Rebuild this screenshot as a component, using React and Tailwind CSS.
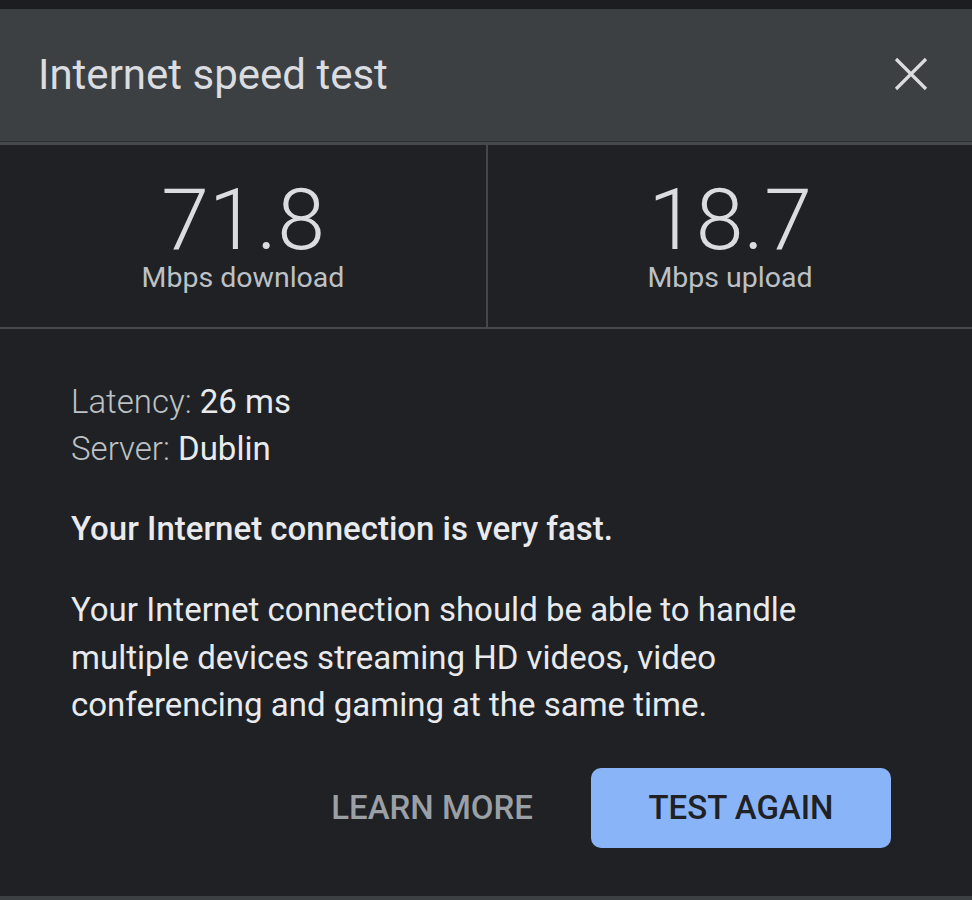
export default function App() {
  return (
    <div className="w-[972px] h-[900px] bg-[#202124] flex flex-col font-['Roboto',sans-serif] overflow-hidden">
      <div className="h-[9px] bg-[#1b1d20] shrink-0" />
      <div className="h-[132px] bg-[#3c4043] shrink-0 flex items-center justify-between pl-[38px] pr-[44px]">
        <div className="text-[42px] leading-none text-[#dadce0] font-normal">Internet speed test</div>
        <svg width="34" height="34" viewBox="0 0 34 34" className="mt-[-3px]">
          <path d="M2 2 L32 32 M32 2 L2 32" stroke="#dadce0" strokeWidth="3.2" strokeLinecap="butt" />
        </svg>
      </div>
      <div className="h-[1px] bg-[#2e3134] shrink-0" />
      <div className="h-[3px] bg-[#45484c] shrink-0" />
      <div className="grid grid-cols-[486px_2px_1fr] h-[182px] shrink-0">
        <div className="flex flex-col items-center pt-[32px]">
          <div className="text-[86px] leading-none font-light text-[#dadce0]">71.8</div>
          <div className="text-[28.5px] leading-none text-[#bdc1c6] mt-[1px]">Mbps download</div>
        </div>
        <div className="bg-[#44474b]" />
        <div className="flex flex-col items-center pt-[32px]">
          <div className="text-[86px] leading-none font-light text-[#dadce0]">18.7</div>
          <div className="text-[28.5px] leading-none text-[#bdc1c6] mt-[1px]">Mbps upload</div>
        </div>
      </div>
      <div className="h-[2px] bg-[#45484c] shrink-0" />
      <div className="flex-1 flex flex-col pl-[71px] pt-[49px]">
        <div className="text-[33px] leading-[47px] text-[#e8eaed]">
          <span className="font-light text-[#bdc1c6]">Latency:</span> 26 ms
        </div>
        <div className="text-[33px] leading-[47px] text-[#e8eaed]">
          <span className="font-light text-[#bdc1c6]">Server:</span> Dublin
        </div>
        <div className="text-[33px] leading-[47px] font-medium text-[#e8eaed] mt-[33px]">
          Your Internet connection is very fast.
        </div>
        <div className="text-[33px] leading-[47.5px] text-[#e8eaed] mt-[34px] w-[760px]">
          Your Internet connection should be able to handle multiple devices streaming HD videos, video conferencing and gaming at the same time.
        </div>
        <div className="flex justify-end items-center pr-[81px] mt-[39px]">
          <div className="text-[33px] font-medium text-[#9aa0a6] mr-[58px]">LEARN MORE</div>
          <div className="w-[300px] h-[80px] rounded-[10px] bg-[#8ab4f8] flex items-center justify-center text-[33px] font-medium text-[#202124]">
            TEST AGAIN
          </div>
        </div>
      </div>
      <div className="h-[4px] bg-[#3c4043] shrink-0" />
    </div>
  );
}
